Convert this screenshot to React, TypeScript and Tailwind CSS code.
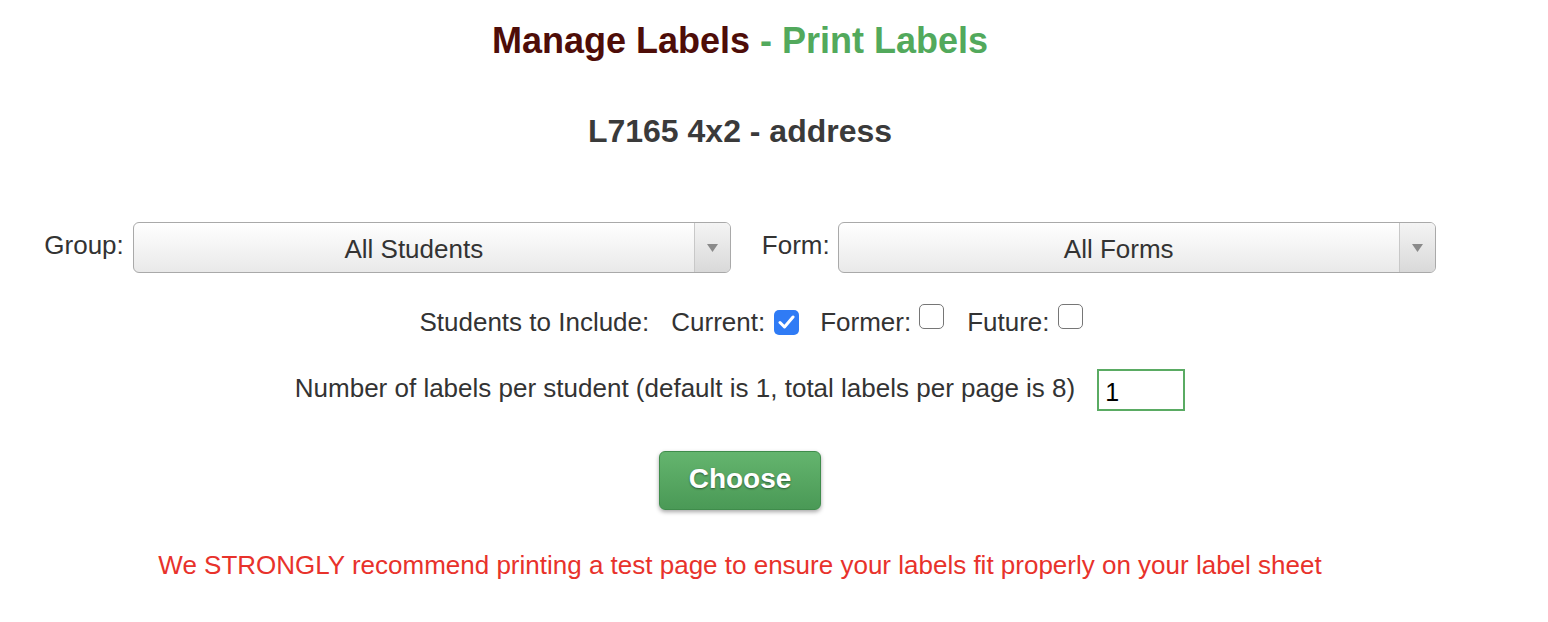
import React from 'react'

function Select({ value }: { value: string }) {
  return (
    <div className="flex h-[51px] w-[598px] rounded-[6px] border border-[#a9a9a9] bg-gradient-to-b from-white to-[#e9e9e9] overflow-hidden">
      <div className="flex flex-1 items-center justify-center text-[26px] text-[#333] pt-[4px]">{value}</div>
      <div className="flex w-[36px] items-center justify-center border-l border-[#c8c8c8] bg-gradient-to-b from-[#f4f4f4] to-[#d9d9d9]">
        <svg width="11" height="8" viewBox="0 0 11 8"><path d="M0 0h11L5.5 8z" fill="#8a8a8a" /></svg>
      </div>
    </div>
  )
}

function Check({ checked = false }: { checked?: boolean }) {
  return checked ? (
    <span className="inline-flex h-[25px] w-[25px] items-center justify-center rounded-[5px] bg-[#2f7bf5]">
      <svg width="17" height="14" viewBox="0 0 17 14"><path d="M2 7.5l4.5 4.5L15 2" stroke="white" strokeWidth="3" fill="none" strokeLinecap="round" strokeLinejoin="round" /></svg>
    </span>
  ) : (
    <span className="inline-block h-[25px] w-[25px] rounded-[5px] border-[1.5px] border-[#767676] bg-white" />
  )
}

export default function App() {
  return (
    <div className="w-[1480px] bg-white text-[#333] font-['Liberation_Sans',Arial,sans-serif]">
      <div className="flex flex-col items-center pt-[20px]">
        <h1 className="text-[36px] leading-[41px] font-bold">
          <span className="text-[#4e0d08]">Manage Labels</span>
          <span className="text-[#52a95c]"> - Print Labels</span>
        </h1>
        <h2 className="mt-[52px] text-[32px] leading-[36px] font-bold text-[#3a3a3a]">L7165 4x2 - address</h2>

        <div className="mt-[73px] flex items-center">
          <span className="text-[26px] mr-[9px] -mt-[4px]">Group:</span>
          <Select value="All Students" />
          <span className="text-[26px] ml-[31px] mr-[8px] -mt-[4px]">Form:</span>
          <Select value="All Forms" />
        </div>

        <div className="mt-[33px] flex items-center pl-[22px] text-[26px] leading-[32px]">
          <span className="mr-[22px]">Students to Include:</span>
          <span className="mr-[9px]">Current:</span>
          <span className="-mt-[4px]"><Check checked /></span>
          <span className="ml-[21px] mr-[8px]">Former:</span>
          <span className="-mt-[4px]"><Check /></span>
          <span className="ml-[23px] mr-[8px]">Future:</span>
          <span className="-mt-[4px]"><Check /></span>
        </div>

        <div className="mt-[31px] flex items-center">
          <span className="text-[26px] mr-[22px] -mt-[3px]">Number of labels per student (default is 1, total labels per page is 8)</span>
          <div className="flex h-[42px] w-[88px] items-center border-2 border-[#5aab63] pl-[6px] pt-[6px] text-[25px] text-black">1</div>
        </div>

        <button className="mt-[40px] h-[59px] w-[162px] rounded-[6px] border border-[#3f8c4b] bg-gradient-to-b from-[#64b56e] to-[#4a9956] pb-[3px] text-[28px] font-bold text-white shadow-[0_2px_4px_rgba(0,0,0,0.35)] [text-shadow:0_1px_2px_rgba(0,0,0,0.45)]">
          Choose
        </button>

        <p className="mt-[36px] text-[26px] text-[#e8322b]">We STRONGLY recommend printing a test page to ensure your labels fit properly on your label sheet</p>
      </div>
      <div className="h-[40px]" />
    </div>
  )
}
